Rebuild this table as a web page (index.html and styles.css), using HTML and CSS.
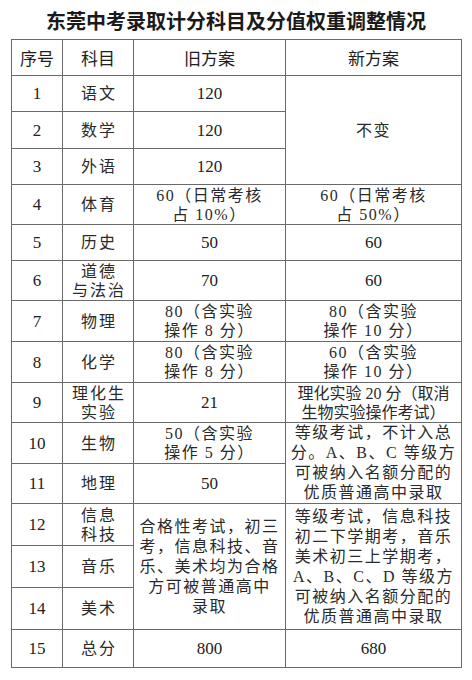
FILE: index.html
```html
<!DOCTYPE html>
<html lang="zh">
<head>
<meta charset="utf-8">
<link rel="stylesheet" href="styles.css">
</head>
<body>
<div class="title">东莞中考录取计分科目及分值权重调整情况</div>
<table class="grid">
  <colgroup>
    <col class="c1"><col class="c2"><col class="c3"><col class="c4">
  </colgroup>
  <thead>
    <tr class="h36">
      <th>序号</th><th>科目</th><th>旧方案</th><th>新方案</th>
    </tr>
  </thead>
  <tbody>
    <tr class="h36"><td>1</td><td class="sub">语文</td><td>120</td><td rowspan="3" class="txt">不变</td></tr>
    <tr class="h37"><td>2</td><td class="sub">数学</td><td>120</td></tr>
    <tr class="h36"><td>3</td><td class="sub">外语</td><td>120</td></tr>
    <tr class="h40"><td>4</td><td class="sub">体育</td><td class="txt">60（日常考核<br>占 10%）</td><td class="txt">60（日常考核<br>占 50%）</td></tr>
    <tr class="h36"><td>5</td><td class="sub">历史</td><td>50</td><td>60</td></tr>
    <tr class="h40"><td>6</td><td class="sub">道德<br>与法治</td><td>70</td><td>60</td></tr>
    <tr class="h41"><td>7</td><td class="sub">物理</td><td class="txt">80（含实验<br>操作 8 分）</td><td class="txt">80（含实验<br>操作 10 分）</td></tr>
    <tr class="h41"><td>8</td><td class="sub">化学</td><td class="txt">80（含实验<br>操作 8 分）</td><td class="txt">60（含实验<br>操作 10 分）</td></tr>
    <tr class="h40"><td>9</td><td class="sub">理化生<br>实验</td><td>21</td><td class="txt tight">理化实验 20 分（取消<br>生物实验操作考试）</td></tr>
    <tr class="h41"><td>10</td><td class="sub">生物</td><td class="txt">50（含实验<br>操作 5 分）</td><td rowspan="2" class="txt many">等级考试，不计入总<br>分。A、B、C 等级方<br>可被纳入名额分配的<br>优质普通高中录取</td></tr>
    <tr class="h40"><td>11</td><td class="sub">地理</td><td>50</td></tr>
    <tr class="h42"><td>12</td><td class="sub">信息<br>科技</td><td rowspan="3" class="txt many">合格性考试，初三<br>考，信息科技、音<br>乐、美术均为合格<br>方可被普通高中<br>录取</td><td rowspan="3" class="txt many">等级考试，信息科技<br>初二下学期考，音乐<br>美术初三上学期考，<br>A、B、C、D 等级方<br>可被纳入名额分配的<br>优质普通高中录取</td></tr>
    <tr class="h42"><td>13</td><td class="sub">音乐</td></tr>
    <tr class="h42"><td>14</td><td class="sub">美术</td></tr>
    <tr class="h38"><td>15</td><td class="sub">总分</td><td>800</td><td>680</td></tr>
  </tbody>
</table>
</body>
</html>
```

FILE: styles.css
```css
html, body {
  margin: 0;
  padding: 0;
  background: #ffffff;
}
body {
  width: 472px;
  height: 680px;
  overflow: hidden;
  font-family: "Liberation Serif", "Noto Sans CJK SC", serif;
  color: #222;
}
.title {
  height: 39px;
  display: flex;
  align-items: center;
  justify-content: center;
  font-family: "Liberation Serif", "Noto Sans CJK SC", serif;
  font-weight: 700;
  font-size: 20px;
  color: #1a1a1a;
  padding-top: 1px;
  box-sizing: border-box;
}
.grid {
  margin-left: 11px;
  border-collapse: collapse;
  table-layout: fixed;
  width: 450px;
  border: 1px solid #8a8a8a;
}
.c1 { width: 51px; }
.c2 { width: 71px; }
.c3 { width: 152px; }
.c4 { width: 176px; }
.grid th, .grid td {
  border: 1px solid #6a6a6a;
  padding: 0;
  text-align: center;
  vertical-align: middle;
  line-height: 19px;
  white-space: nowrap;
}
.grid th {
  font-family: "Noto Sans CJK SC", sans-serif;
  font-weight: 400;
  font-size: 17px;
  color: #1e1e1e;
}
.grid td {
  font-size: 17px;
}
.grid td.sub {
  font-size: 16px;
  letter-spacing: 2px;
  padding-left: 2px;
  color: #2a2a2a;
}
.grid td.txt {
  font-size: 16px;
  letter-spacing: 1.5px;
  color: #2a2a2a;
}
.grid td.many {
  line-height: 20px;
}
.grid td.tight {
  letter-spacing: 0;
}
.h36 { height: 36px; }
.h37 { height: 37px; }
.h38 { height: 38px; }
.h40 { height: 40px; }
.h41 { height: 41px; }
.h42 { height: 42px; }
```
